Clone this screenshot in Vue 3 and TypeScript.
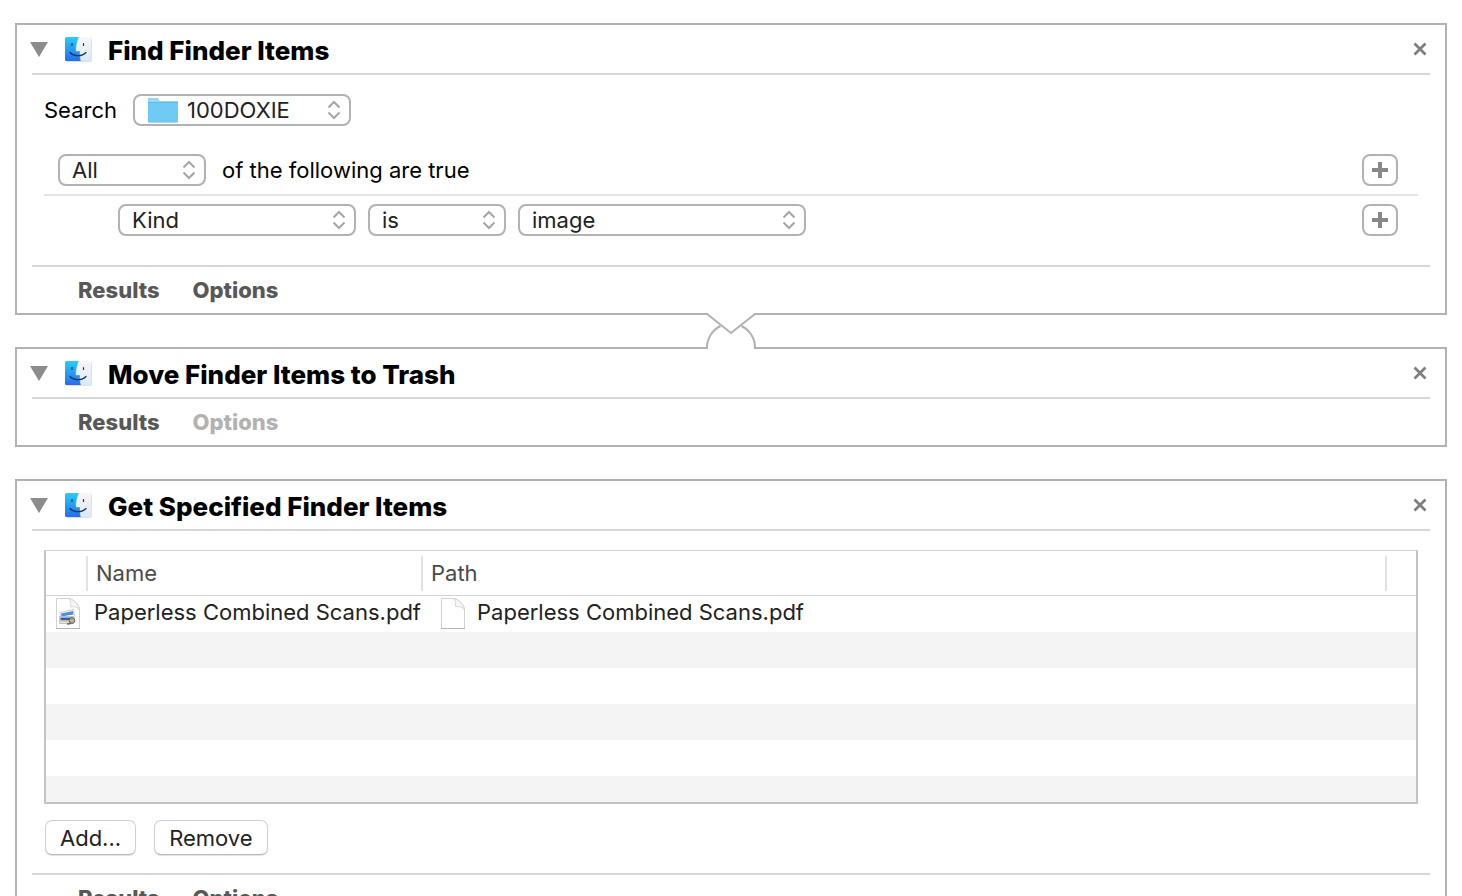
<script setup lang="ts">
import { ref } from 'vue'

interface Action {
  id: string
  title: string
  optionsEnabled: boolean
}

interface FinderItem {
  name: string
  path: string
}

const actions: Action[] = [
  { id: 'find', title: 'Find Finder Items', optionsEnabled: true },
  { id: 'trash', title: 'Move Finder Items to Trash', optionsEnabled: false },
  { id: 'get', title: 'Get Specified Finder Items', optionsEnabled: true },
]

const files: FinderItem[] = [
  { name: 'Paperless Combined Scans.pdf', path: 'Paperless Combined Scans.pdf' },
]

const folder = ref('100DOXIE')
const match = ref('All')
const attribute = ref('Kind')
const operator = ref('is')
const kind = ref('image')
</script>

<template>
  <main class="workflow">
    <template v-for="(action, index) in actions" :key="action.id">
      <div v-if="index > 0" class="gap">
        <svg v-if="index === 1" class="connector" width="50" height="36" viewBox="0 0 50 36" aria-hidden="true">
          <path d="M2 0H48V2L25 21L2 2ZM2 36V34H48V36Z" fill="#fff" />
          <path d="M1 36V35A24 24 0 0 1 14 13L25 21L36 13A24 24 0 0 1 49 35V36Z" fill="#fff" />
          <path d="M1 36V35A24 24 0 0 1 14.500 13M35.500 13A24 24 0 0 1 49 35V36" fill="none" stroke="#b2b2b2" stroke-width="2" />
          <path d="M0 1H1L25 20L49 1H50" fill="none" stroke="#b2b2b2" stroke-width="2" />
        </svg>
      </div>
      <section class="card" :aria-labelledby="`title-${action.id}`">
        <header class="head">
          <button class="plain disclosure" type="button" aria-label="Collapse action">
            <svg width="18" height="15" viewBox="0 0 18 15"><path d="M0 0H18L9 15Z" fill="#8c8c8c" /></svg>
          </button>
          <svg class="finder" width="30" height="28" viewBox="0 0 30 28" aria-hidden="true">
            <defs>
              <linearGradient :id="`blue-${action.id}`" x1="0" y1="0" x2="0" y2="1">
                <stop offset="0" stop-color="#29cdfb" /><stop offset="1" stop-color="#236df0" />
              </linearGradient>
              <linearGradient :id="`pale-${action.id}`" x1="0" y1="0" x2="0" y2="1">
                <stop offset="0" stop-color="#f7f7f8" /><stop offset="1" stop-color="#dde8f5" />
              </linearGradient>
            </defs>
            <rect x="2" y="3" width="27" height="24" rx="2" fill="#000" opacity=".12" />
            <rect x="2" y="2" width="26" height="24" rx="1.500" :fill="`url(#pale-${action.id})`" />
            <path d="M3.500 2H16C14 7 13 11 13 16H17C17 20 17 23 18 26H3.500Q2 26 2 24.500V3.500Q2 2 3.500 2Z" :fill="`url(#blue-${action.id})`" />
            <path d="M16 2C14 7 13 11 13 16H17C17 20 17 23 18 26" fill="none" stroke="#fff" stroke-width=".6" opacity=".6" />
            <path d="M9 8.500V10.500M20.500 8.500V10.500" stroke="#18324e" stroke-width="1.200" stroke-linecap="round" />
            <path d="M7 17.500C11 21.800 19 21.800 23 17.500" fill="none" stroke="#18324e" stroke-width="1.200" stroke-linecap="round" />
          </svg>
          <h2 :id="`title-${action.id}`" class="title">{{ action.title }}</h2>
          <button class="plain close" type="button" aria-label="Remove action">
            <svg width="14" height="14" viewBox="0 0 14 14"><path d="M1.500 1.500L12.500 12.500M12.500 1.500L1.500 12.500" stroke="#7f7f7f" stroke-width="2.800" /></svg>
          </button>
        </header>

        <div v-if="action.id === 'find'" class="body search-body">
          <div class="row search-row">
            <label for="folder">Search</label>
            <span class="popup folder-popup">
              <select id="folder" v-model="folder"><option>100DOXIE</option></select>
              <svg class="folder" width="32" height="26" viewBox="0 0 32 26" aria-hidden="true">
                <path d="M1 2.500Q1 1 2.500 1H9.500Q10.500 1 11.300 2L12.500 4H29.500Q31 4 31 5.500V24Q31 25.500 29.500 25.500H2.500Q1 25.500 1 24Z" fill="#4fb0dc" />
                <path d="M1 2.500Q1 1 2.500 1H9.500Q10.500 1 11.300 2L12.500 4H29.500Q31 4 31 5.500V23.500Q31 24.500 29.500 24.500H2.500Q1 24.500 1 23.500Z" fill="#93d9f8" />
                <path d="M1 6H31V23.500Q31 24.500 29.500 24.500H2.500Q1 24.500 1 23.500Z" fill="#70cbf4" />
                <path d="M1 5.500H31" stroke="#5fbce8" />
              </svg>
              <svg class="arrows" width="14" height="20" viewBox="0 0 14 20" aria-hidden="true"><path d="M1.500 7.500L7 2L12.500 7.500M1.500 12.500L7 18L12.500 12.500" /></svg>
            </span>
          </div>
          <div class="row match-row">
            <span class="popup match-popup">
              <select id="match" v-model="match"><option>All</option><option>Any</option></select>
              <svg class="arrows" width="14" height="20" viewBox="0 0 14 20" aria-hidden="true"><path d="M1.500 7.500L7 2L12.500 7.500M1.500 12.500L7 18L12.500 12.500" /></svg>
            </span>
            <label for="match">of the following are true</label>
            <button class="add" type="button" aria-label="Add condition">
              <svg width="16" height="16" viewBox="0 0 16 16"><path d="M8 0V16M0 8H16" stroke="#888" stroke-width="4" /></svg>
            </button>
          </div>
          <div class="row rule-row">
            <span class="popup attribute-popup">
              <select v-model="attribute" aria-label="Attribute"><option>Kind</option></select>
              <svg class="arrows" width="14" height="20" viewBox="0 0 14 20" aria-hidden="true"><path d="M1.500 7.500L7 2L12.500 7.500M1.500 12.500L7 18L12.500 12.500" /></svg>
            </span>
            <span class="popup operator-popup">
              <select v-model="operator" aria-label="Operator"><option>is</option></select>
              <svg class="arrows" width="14" height="20" viewBox="0 0 14 20" aria-hidden="true"><path d="M1.500 7.500L7 2L12.500 7.500M1.500 12.500L7 18L12.500 12.500" /></svg>
            </span>
            <span class="popup kind-popup">
              <select v-model="kind" aria-label="Value"><option>image</option></select>
              <svg class="arrows" width="14" height="20" viewBox="0 0 14 20" aria-hidden="true"><path d="M1.500 7.500L7 2L12.500 7.500M1.500 12.500L7 18L12.500 12.500" /></svg>
            </span>
            <button class="add" type="button" aria-label="Add condition">
              <svg width="16" height="16" viewBox="0 0 16 16"><path d="M8 0V16M0 8H16" stroke="#888" stroke-width="4" /></svg>
            </button>
          </div>
        </div>

        <div v-if="action.id === 'get'" class="body items-body">
          <div class="list">
            <table>
              <colgroup><col class="col-icon" /><col class="col-name" /><col /><col class="col-end" /></colgroup>
              <thead>
                <tr>
                  <th><span class="cell"></span></th>
                  <th scope="col"><span class="cell">Name</span></th>
                  <th scope="col"><span class="cell">Path</span></th>
                  <th></th>
                </tr>
              </thead>
              <tbody>
                <tr v-for="file in files" :key="file.path">
                  <td>
                    <svg class="doc" width="26" height="32" viewBox="0 0 26 32" aria-hidden="true">
                      <path d="M1.500 .5H14C19 1.500 24.500 7 24.500 12V30.500H1.500Z" fill="#fff" stroke="#d2d2d2" />
                      <path d="M1 30.500H25" stroke="#b4b4b4" />
                      <path d="M14 .5C16 3 16 6 15.500 9C19 8.500 23 9 24.500 12C24 7 19 1.500 14 .5Z" fill="#f6f6f6" stroke="#cfcfcf" stroke-width=".8" />
                      <path d="M5 14.500L18.500 11.500L20 20L6 23Z" fill="#fff" stroke="#b9b9b9" stroke-width=".7" />
                      <path d="M6 15.500L18 13L18.500 16.500L6.500 18.500Z" fill="#4f8fda" />
                      <path d="M4.500 18.500H18.500V25.500H4.500Z" fill="#f2f4f7" stroke="#a9a9a9" stroke-width=".7" />
                      <path d="M5.500 19.500H17.500V22.500H5.500Z" fill="#34609f" />
                      <path d="M5.500 22.500H17.500V24.500H5.500Z" fill="#dcc9a4" />
                      <circle cx="17" cy="22.500" r="2.800" fill="#b8aea4" stroke="#625d59" />
                      <path d="M12 26L16 25.500" stroke="#6b625b" stroke-width="1.500" />
                    </svg>
                  </td>
                  <td>{{ file.name }}</td>
                  <td>
                    <span class="path">
                      <svg class="doc" width="26" height="32" viewBox="0 0 26 32" aria-hidden="true">
                        <path d="M1.500 .5H14C19 1.500 24.500 7 24.500 12V30.500H1.500Z" fill="#fff" stroke="#d2d2d2" />
                        <path d="M1 30.500H25" stroke="#b4b4b4" />
                        <path d="M14 .5C15.500 3 15.500 6 15.500 8.500C19 8.500 23 9 24.500 12C24 7 19 1.500 14 .5Z" fill="#f6f6f6" stroke="#cfcfcf" stroke-width=".8" />
                      </svg>
                      {{ file.path }}
                    </span>
                  </td>
                  <td></td>
                </tr>
              </tbody>
            </table>
            <div class="stripes"></div>
          </div>
          <div class="row buttons">
            <button class="push" type="button">Add...</button>
            <button class="push" type="button">Remove</button>
          </div>
        </div>

        <footer class="foot" :class="{ ruled: action.id !== 'trash' }">
          <button class="plain tab" type="button">Results</button>
          <button class="plain tab" type="button" :disabled="!action.optionsEnabled">Options</button>
        </footer>
      </section>
    </template>
  </main>
</template>

<style>
body {
  margin: 0;
  background: #fff;
}
</style>

<style scoped>
.workflow {
  box-sizing: border-box;
  height: 100vh;
  overflow: hidden;
  padding: 23px 15px 0;
  font-family: Inter, "Noto Sans", sans-serif;
  font-size: 22px;
  line-height: 28px;
  color: #000;
}
.workflow * { box-sizing: border-box; }
svg { display: block; flex: none; }
button, select { font: inherit; color: inherit; }
.plain { border: 0; padding: 0; background: none; }

.card { border: 2px solid #b2b2b2; background: #fff; }
.gap { height: 32px; display: flex; justify-content: center; }
.connector { position: relative; margin-top: -2px; }

.head {
  display: flex;
  align-items: center;
  height: 50px;
  margin: 0 15px;
  padding-right: 3px;
  border-bottom: 2px solid #d8d8d8;
}
.disclosure { margin-left: -2px; }
.finder { margin: 0 15px; }
.title { margin: 0; padding-top: 4px; font-size: 26px; line-height: 32px; font-weight: 800; }
.close { margin-left: auto; }

.body { margin: 0 27px; }
.row { display: flex; align-items: center; }
.search-body { padding: 19px 0 29px; }
.search-row { gap: 16px; padding-bottom: 28px; }
.match-row { gap: 16px; padding: 0 20px 8px 14px; border-bottom: 2px solid #e3e3e3; }
.rule-row { gap: 12px; padding: 8px 20px 0 74px; }

.popup { position: relative; height: 32px; }
.popup select {
  appearance: none;
  display: block;
  width: 100%;
  height: 32px;
  padding: 0 36px 0 12px;
  border: 2px solid #b2b2b2;
  border-radius: 8px;
  background: #fff;
  color: #222;
  line-height: 28px;
}
.folder-popup { width: 218px; }
.folder-popup select { padding-left: 52px; }
.match-popup { width: 148px; }
.attribute-popup { width: 238px; }
.operator-popup { width: 138px; }
.kind-popup { width: 288px; }
.folder { position: absolute; left: 14px; top: 3px; pointer-events: none; }
.arrows {
  position: absolute;
  right: 10px;
  top: 6px;
  fill: none;
  stroke: #a6a6a6;
  stroke-width: 2;
  pointer-events: none;
}
.add {
  display: grid;
  place-items: center;
  width: 36px;
  height: 32px;
  margin-left: auto;
  padding: 0;
  border: 2px solid #b2b2b2;
  border-radius: 8px;
  background: #fff;
}

.foot { display: flex; align-items: center; gap: 33px; height: 46px; margin: 0 15px; padding-left: 46px; }
.foot.ruled { height: 48px; border-top: 2px solid #d8d8d8; }
.tab { font-weight: 800; color: #585858; }
.tab:disabled { color: #b2b2b2; }

.items-body { padding: 19px 0 18px; }
.list { border: 2px solid #c3c3c3; border-top: 1px solid #d3d3d3; }
table { width: 100%; table-layout: fixed; border-collapse: separate; border-spacing: 0; }
.col-icon { width: 42px; }
.col-name { width: 335px; }
.col-end { width: 29px; }
th { height: 45px; padding: 0; border-bottom: 1px solid #d3d3d3; text-align: left; font-weight: 400; color: #4a4a4a; }
.cell { display: block; height: 35px; line-height: 35px; padding-left: 8px; border-right: 2px solid #e3e3e3; }
td { height: 36px; padding: 0; color: #222; white-space: nowrap; line-height: 32px; vertical-align: top; }
td:first-child { padding: 2px 0 0 9px; }
td:nth-child(2) { padding-left: 6px; }
.path { display: flex; gap: 11px; padding-left: 17px; }
.path .doc { margin-top: 2px; }
.stripes { height: 170px; background: repeating-linear-gradient(#f4f4f4 0 36px, #fff 36px 72px); }
.buttons { gap: 18px; padding: 16px 1px 0; }
.push {
  height: 35px;
  padding: 0 14px;
  border: 1px solid #d0d0d0;
  border-bottom-color: #b8b8b8;
  border-radius: 7px;
  background: #fff;
  box-shadow: 0 1px 1px rgba(0, 0, 0, 0.12);
  color: #222;
  line-height: 34px;
}
</style>
